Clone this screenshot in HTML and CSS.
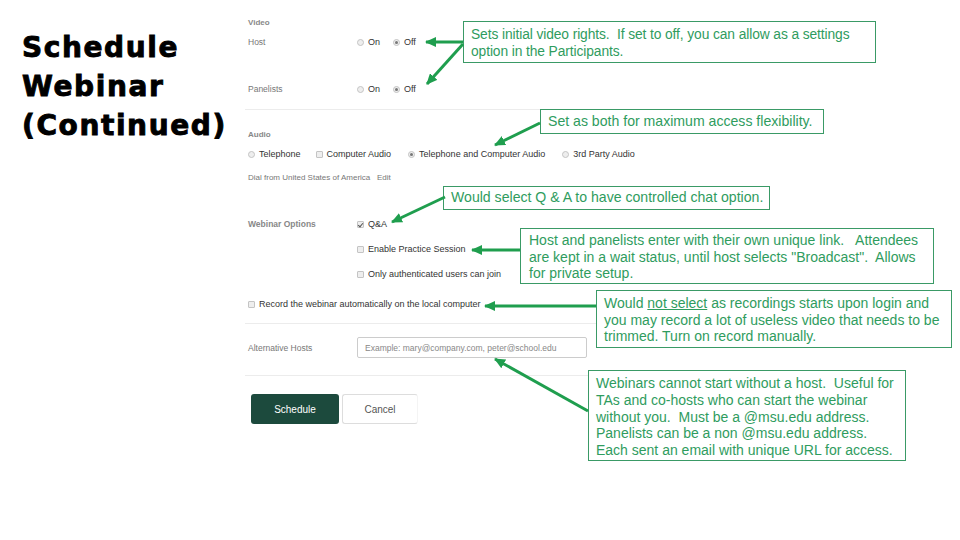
FILE: index.html
```html
<!DOCTYPE html>
<html>
<head>
<meta charset="utf-8">
<link rel="stylesheet" href="styles.css">
</head>
<body>
<div class="slide">
  <div class="title-col">
    <h1 class="title">Schedule<br>Webinar<br>(Continued)</h1>
  </div>
  <div class="form">
    <div class="row sect r-video">Video</div>
    <div class="row r-host">
      <span class="label">Host</span>
      <span class="opt"><i class="radio"></i>On</span>
      <span class="opt"><i class="radio on"></i>Off</span>
    </div>
    <div class="row r-pan">
      <span class="label">Panelists</span>
      <span class="opt"><i class="radio"></i>On</span>
      <span class="opt"><i class="radio on"></i>Off</span>
    </div>
    <div class="divider d1"></div>
    <div class="row sect r-audio">Audio</div>
    <div class="row r-aopts">
      <span class="opt o-tel"><i class="radio"></i>Telephone</span>
      <span class="opt o-comp"><i class="check"></i>Computer Audio</span>
      <span class="opt o-both"><i class="radio on"></i>Telephone and Computer Audio</span>
      <span class="opt"><i class="radio"></i>3rd Party Audio</span>
    </div>
    <div class="row dial r-dial">Dial from United States of America&nbsp;&nbsp; Edit</div>
    <div class="row r-w1">
      <span class="label bold">Webinar Options</span>
      <span class="opt"><i class="check on"></i>Q&amp;A</span>
    </div>
    <div class="row r-w2 indent">
      <span class="opt"><i class="check"></i>Enable Practice Session</span>
    </div>
    <div class="row r-w3 indent">
      <span class="opt"><i class="check"></i>Only authenticated users can join</span>
    </div>
    <div class="row r-rec">
      <span class="opt"><i class="check"></i>Record the webinar automatically on the local computer</span>
    </div>
    <div class="divider d2"></div>
    <div class="row r-alt">
      <span class="label">Alternative Hosts</span>
      <span class="input">Example: mary@company.com, peter@school.edu</span>
    </div>
    <div class="divider d3"></div>
    <div class="buttons">
      <span class="btn primary">Schedule</span>
      <span class="btn secondary">Cancel</span>
    </div>
  </div>

  <div class="callout c1">Sets initial video rights.  If set to off, you can allow as a settings<br>option in the Participants.</div>
  <div class="callout c2">Set as both for maximum access flexibility.</div>
  <div class="callout c3">Would select Q &amp; A to have controlled chat option.</div>
  <div class="callout c4">Host and panelists enter with their own unique link.   Attendees<br>are kept in a wait status, until host selects "Broadcast".  Allows<br>for private setup.</div>
  <div class="callout c5">Would <u>not select</u> as recordings starts upon login and<br>you may record a lot of useless video that needs to be<br>trimmed. Turn on record manually.</div>
  <div class="callout c6">Webinars cannot start without a host.  Useful for<br>TAs and co-hosts who can start the webinar<br>without you.  Must be a @msu.edu address.<br>Panelists can be a non @msu.edu address.<br>Each sent an email with unique URL for access.</div>

  <svg class="arrows" width="960" height="540" viewBox="0 0 960 540">
    <defs>
      <marker id="ah" markerUnits="userSpaceOnUse" markerWidth="12" markerHeight="10" refX="10" refY="5" orient="auto">
        <path d="M0,0 L11,5 L0,10 Z" fill="#1f9e4e"/>
      </marker>
    </defs>
    <g stroke="#1f9e4e" stroke-width="3" fill="none" marker-end="url(#ah)">
      <line x1="463" y1="42" x2="426" y2="42"/>
      <line x1="463" y1="44" x2="427" y2="84"/>
      <line x1="540" y1="123" x2="495" y2="145"/>
      <line x1="445" y1="197" x2="392" y2="222"/>
      <line x1="520" y1="250" x2="472" y2="250"/>
      <line x1="596" y1="306" x2="485" y2="306"/>
      <line x1="588" y1="411" x2="495" y2="359"/>
    </g>
  </svg>
</div>
</body>
</html>
```
FILE: styles.css
```css
* { box-sizing: border-box; }
html, body { margin: 0; padding: 0; background: #fff; }
.slide {
  position: relative;
  width: 960px;
  height: 540px;
  overflow: hidden;
  display: flex;
  align-items: flex-start;
  font-family: "Liberation Sans", Arial, sans-serif;
}
.title-col {
  width: 245px;
  flex: none;
  padding: 28px 0 0 22px;
}
.title {
  margin: 0;
  font-family: "DejaVu Sans", sans-serif;
  font-weight: bold;
  font-size: 28px;
  letter-spacing: 1.6px;
  line-height: 39px;
  color: #000;
  -webkit-text-stroke: 0.9px #000;
}
.form {
  width: 400px;
  flex: none;
  padding-top: 16px;
  display: flex;
  flex-direction: column;
  font-size: 9px;
  color: #333;
}
.row {
  display: flex;
  align-items: center;
  padding-left: 3px;
  white-space: nowrap;
}
.label {
  width: 109px;
  flex: none;
  color: #777;
  font-size: 8.5px;
}
.label.bold { font-weight: bold; color: #888; }
.sect { height: 12px; color: #888; font-weight: bold; font-size: 8px; }
.indent { padding-left: 112px; }
.opt {
  display: inline-flex;
  align-items: center;
  flex: none;
  white-space: nowrap;
  gap: 4px;
  margin-right: 13px;
  color: #333;
}
.radio, .check {
  display: inline-block;
  width: 7px;
  height: 7px;
  border: 1px solid #c4c4c4;
  background: #eee;
  flex: none;
  position: relative;
}
.radio { border-radius: 50%; }
.check { border-radius: 1px; }
.radio.on::after {
  content: "";
  position: absolute;
  left: 1px; top: 1px;
  width: 3px; height: 3px;
  border-radius: 50%;
  background: #777;
}
.check.on::after {
  content: "";
  position: absolute;
  left: 1px; top: 0px;
  width: 2px; height: 4px;
  border-right: 1px solid #555;
  border-bottom: 1px solid #555;
  transform: rotate(40deg);
}
.r-host { margin-top: 4px; height: 20px; }
.r-pan { margin-top: 27px; height: 20px; }
.divider { height: 1px; background: #ececec; }
.d1 { margin-top: 10px; }
.r-audio { margin-top: 18px; }
.r-aopts { margin-top: 6px; height: 16px; }
.o-tel { margin-right: 15px; }
.o-comp { margin-right: 17px; }
.o-both { margin-right: 17px; }
.dial { margin-top: 9px; height: 12px; color: #777; font-size: 8px; }
.r-w1 { margin-top: 31px; height: 20px; }
.r-w2 { margin-top: 5px; height: 20px; }
.r-w3 { margin-top: 5px; height: 20px; }
.r-rec { margin-top: 10px; height: 20px; }
.d2 { margin-top: 9px; }
.r-alt { margin-top: 13px; height: 21px; }
.input {
  width: 230px;
  height: 21px;
  border: 1px solid #ccc;
  border-radius: 2px;
  padding-left: 7px;
  display: flex;
  align-items: center;
  color: #888;
  font-size: 8.5px;
}
.d3 { margin-top: 17px; width: 345px; }
.buttons {
  margin-top: 18px;
  padding-left: 6px;
  display: flex;
  gap: 3px;
}
.btn {
  height: 30px;
  display: flex;
  align-items: center;
  justify-content: center;
  font-size: 10px;
  border-radius: 3px;
}
.primary { width: 88px; background: #1c4a3d; color: #fff; }
.secondary { width: 76px; background: #fff; color: #555; border: 1px solid #ddd; border-right-color: #f4f4f4; }

.callout {
  position: absolute;
  border: 1.5px solid #3a9a66;
  color: #2f9c5e;
  background: #fff;
  white-space: pre;
  line-height: 17px;
  font-size: 14px;
  padding: 4px 0 0 7px;
}
.c1 { left: 463px; top: 21px; width: 413px; height: 42px; font-size: 13.8px; letter-spacing: -0.1px; }
.c2 { left: 540px; top: 109px; width: 284px; height: 25px; font-size: 14.1px; padding-top: 3px; }
.c3 { left: 443px; top: 186px; width: 327px; height: 24px; font-size: 14.1px; padding-top: 2px; }
.c4 { left: 520px; top: 228px; width: 414px; height: 56px; line-height: 16.5px; padding: 3px 0 0 8px; }
.c5 { left: 596px; top: 290px; width: 356px; height: 58px; line-height: 16.5px; padding: 4px 0 0 7px; }
.c6 { left: 588px; top: 370px; width: 318px; height: 91px; line-height: 16.8px; padding: 4px 0 0 7px; }
.callout u { text-decoration-thickness: 1px; }
.arrows { position: absolute; left: 0; top: 0; pointer-events: none; }
```
